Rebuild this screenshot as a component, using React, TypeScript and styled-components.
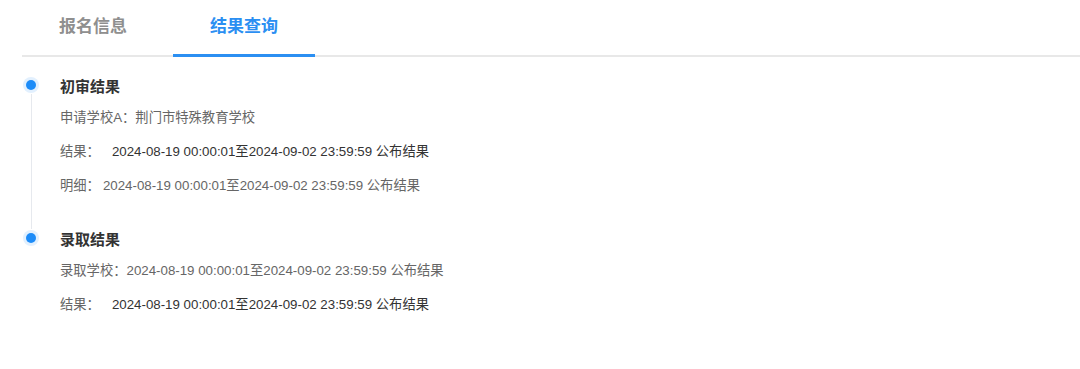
import React from "react";
import styled, { createGlobalStyle } from "styled-components";

const GlobalStyle = createGlobalStyle`
  html, body {
    margin: 0;
    padding: 0;
    background: #ffffff;
  }
  body {
    font-family: "Liberation Sans", "Noto Sans CJK SC", sans-serif;
    color: #333;
  }
`;

const Page = styled.div`
  width: 1080px;
  height: 369px;
  background: #fff;
  padding-left: 22px;
  box-sizing: border-box;
  overflow: hidden;
`;

const TabBar = styled.div`
  display: flex;
  gap: 9px;
  height: 55px;
  border-bottom: 2px solid #e8e8e8;
`;

const Tab = styled.div<{ $active?: boolean }>`
  position: relative;
  width: 142px;
  display: flex;
  align-items: center;
  justify-content: center;
  padding-bottom: 6px;
  box-sizing: border-box;
  font-size: 17px;
  font-weight: 700;
  color: ${(p) => (p.$active ? "#2b8ff2" : "#8f8f8f")};
  &::after {
    content: "";
    display: ${(p) => (p.$active ? "block" : "none")};
    position: absolute;
    left: 0;
    right: 0;
    bottom: -2px;
    height: 3px;
    background: #2b8ff2;
  }
`;

const Timeline = styled.div`
  display: flex;
  flex-direction: column;
  padding-top: 19px;
`;

const Item = styled.div`
  display: flex;
`;

const Rail = styled.div`
  width: 38px;
  display: flex;
  flex-direction: column;
  align-items: flex-start;
  padding-top: 4px;
  padding-left: 4px;
  box-sizing: border-box;
`;

const Dot = styled.div`
  width: 10px;
  height: 10px;
  border-radius: 50%;
  background: #1d8cf8;
  box-shadow: 0 0 0 3px #e2f0fe;
  flex: none;
`;

const Line = styled.div<{ $hidden?: boolean }>`
  flex: 1;
  width: 1px;
  margin-left: 4.5px;
  margin-top: 4px;
  background: ${(p) => (p.$hidden ? "transparent" : "#e6e9ee")};
`;

const Content = styled.div<{ $last?: boolean }>`
  display: flex;
  flex-direction: column;
  gap: 14px;
  padding-bottom: ${(p) => (p.$last ? "0" : "33px")};
`;

const Title = styled.div`
  font-size: 15px;
  line-height: 22px;
  font-weight: 700;
  color: #333;
  margin-bottom: -4px;
`;

const Row = styled.div`
  font-size: 13.3px;
  line-height: 20px;
  color: #666;
  white-space: nowrap;
`;

const Value = styled.span<{ $dark?: boolean; $gap?: number }>`
  color: ${(p) => (p.$dark ? "#333" : "#666")};
  margin-left: ${(p) => p.$gap ?? 0}px;
`;

const RANGE = "2024-08-19 00:00:01至2024-09-02 23:59:59 公布结果";

export default function App() {
  return (
    <>
      <GlobalStyle />
      <Page>
        <TabBar>
          <Tab>报名信息</Tab>
          <Tab $active>结果查询</Tab>
        </TabBar>
        <Timeline>
          <Item>
            <Rail>
              <Dot />
              <Line />
            </Rail>
            <Content>
              <Title>初审结果</Title>
              <Row>申请学校A：荆门市特殊教育学校</Row>
              <Row>
                结果：<Value $dark $gap={12}>{RANGE}</Value>
              </Row>
              <Row>
                明细：<Value $gap={3}>{RANGE}</Value>
              </Row>
            </Content>
          </Item>
          <Item>
            <Rail>
              <Dot />
              <Line $hidden />
            </Rail>
            <Content $last>
              <Title>录取结果</Title>
              <Row>录取学校：{RANGE}</Row>
              <Row>
                结果：<Value $dark $gap={12}>{RANGE}</Value>
              </Row>
            </Content>
          </Item>
        </Timeline>
      </Page>
    </>
  );
}
